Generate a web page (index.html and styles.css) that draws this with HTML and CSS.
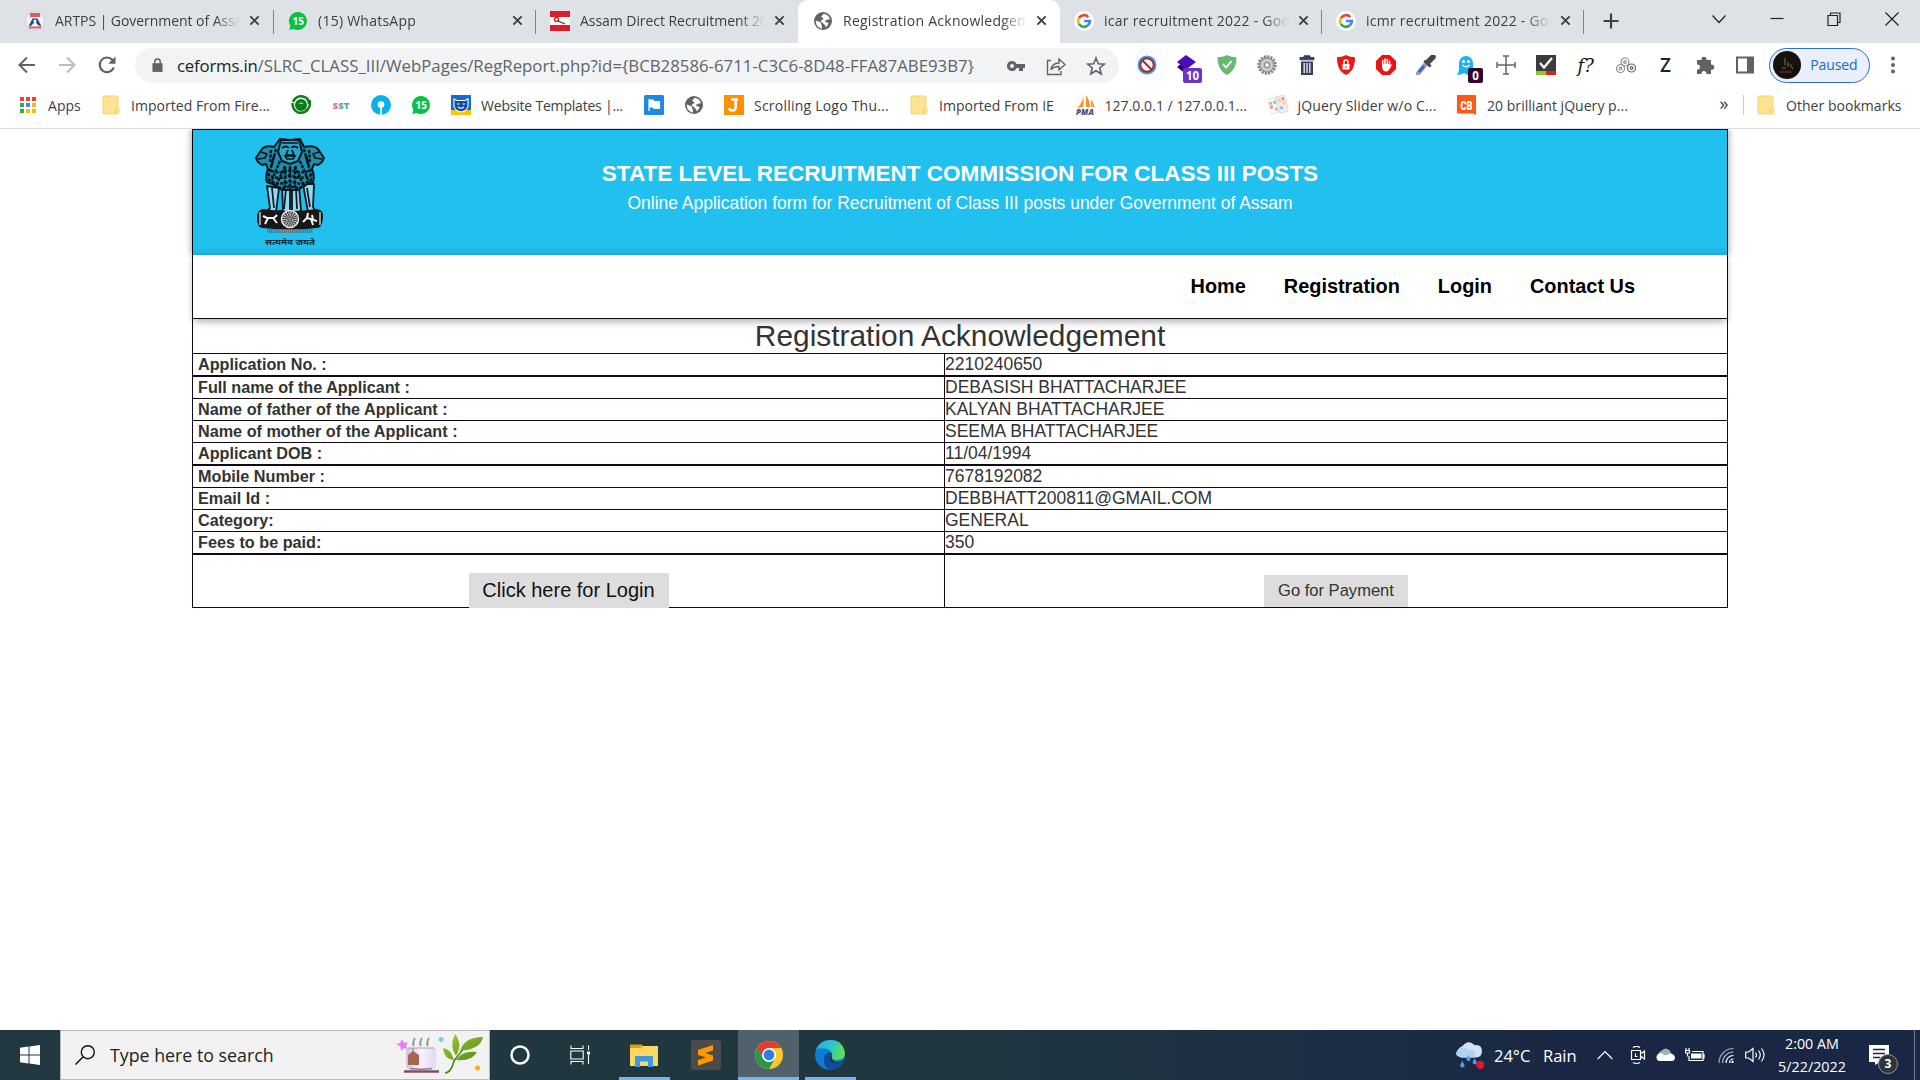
FILE: index.html
```html
<!DOCTYPE html>
<html lang="en">
<head>
<meta charset="utf-8">
<title>Registration Acknowledgement</title>
<link rel="stylesheet" href="styles.css">
</head>
<body>
<svg class="defs" width="0" height="0">
  <defs>
    <symbol id="close" viewBox="0 0 12 12"><path d="M1.5 1.5l9 9M10.5 1.5l-9 9" stroke="#3c4043" stroke-width="2.1" fill="none"/></symbol>
    <symbol id="google" viewBox="0 0 20 20"><circle cx="10" cy="10" r="10" fill="#fff"/><g fill="none" stroke-width="2.7"><path d="M14.3 6.1A5.9 5.9 0 0 0 4.9 7.1" stroke="#ea4335"/><path d="M4.9 7.1a5.9 5.9 0 0 0 0 5.8" stroke="#fbbc05"/><path d="M4.9 12.9a5.9 5.9 0 0 0 9 1.4" stroke="#34a853"/><path d="M10 10h5.9a5.9 5.9 0 0 1-2 4.3" stroke="#4285f4"/></g></symbol>
    <symbol id="whatsapp" viewBox="0 0 20 20"><path d="M10 1a9 9 0 1 1-4.4 16.9L1.2 19l1.2-4.2A9 9 0 0 1 10 1z" fill="#08c143"/><text x="10.2" y="13.7" text-anchor="middle" font-family="Open Sans, sans-serif" font-size="10" font-weight="700" fill="#fff">15</text></symbol>
    <symbol id="globe" viewBox="0 0 20 20"><circle cx="10" cy="10" r="9" fill="#5f6368"/><path d="M2.8 9.6l4.1 1.5c1.4.4 1 2.1 1.7 3.1.7.8-.1 1.7.5 3.4C5 17 2.400 13.600 2.800 9.600zM8.200 5.200C9.600 4.700 9.600 3 10.900 2.700c3 .5 5.400 2.500 6 5.400-1 1.300-1.300-.6-2.600.6-.8 1-2.500.2-2.300 1.500.3 1.200 2.500.7 3.500 2.100-.3 1.700-1.500 3.100-3 4 .3-1.900-1.300-3-2.600-4.100-.8-1-2.600-1.200-1.900-2.700 1-1.500 2.800-.6 2.300-2.100-.4-1.400-2.100-.6-2.100-2.200z" fill="#fff"/></symbol>
    <symbol id="folder" viewBox="0 0 18 20"><path d="M1.500 1h13q1.500 0 1.500 1.500V13l1 1v3.500q0 1.500-1.500 1.500H2.500Q1 19 1 17.500v-15z" fill="#ffe393" stroke="#f5d36a"/><path d="M13.500 18.500V15l2-1.500" fill="none" stroke="#eec95b"/></symbol>
  </defs>
</svg>

<div class="browser">
  <div class="tabs">
    <div class="tab snug"><svg class="fav" viewBox="0 0 20 20"><circle cx="10" cy="10" r="9.500" fill="#f1f4fa" stroke="#c7cfdf"/><path d="M5 2h10v4H5z" fill="#e2595a"/><path d="M3.500 15.500l4-8h5l4 8-3-1-3.500-4-3.500 4z" fill="#27477f"/><circle cx="10" cy="10" r="1.600" fill="#fff"/><path d="M4 16.500h12" stroke="#d95a5a" stroke-width="2"/></svg><span class="tab-title">ARTPS | Government of Assam</span><svg class="x"><use href="#close"/></svg></div>
    <div class="tab"><svg class="fav"><use href="#whatsapp"/></svg><span class="tab-title">(15) WhatsApp</span><svg class="x"><use href="#close"/></svg></div>
    <div class="tab before-active snug"><svg class="fav" viewBox="0 0 20 20"><path d="M0 0h20v20H0z" fill="#d9202a"/><path d="M0 6h20v8H0z" fill="#fff"/><circle cx="6.500" cy="8.500" r="2" fill="none" stroke="#d9202a" stroke-width="1.500"/><path d="M8 10l7 3" stroke="#7d1b20" stroke-width="1.200"/></svg><span class="tab-title">Assam Direct Recruitment 2022</span><svg class="x"><use href="#close"/></svg></div>
    <div class="tab active"><svg class="fav"><use href="#globe"/></svg><span class="tab-title">Registration Acknowledgement</span><svg class="x"><use href="#close"/></svg></div>
    <div class="tab"><svg class="fav"><use href="#google"/></svg><span class="tab-title">icar recruitment 2022 - Google</span><svg class="x"><use href="#close"/></svg></div>
    <div class="tab"><svg class="fav"><use href="#google"/></svg><span class="tab-title">icmr recruitment 2022 - Google</span><svg class="x"><use href="#close"/></svg></div>
    <svg class="plus" viewBox="0 0 16 16"><path d="M8 .5v15M.5 8h15" stroke="#3c4043" stroke-width="2.200"/></svg>
    <div class="window-buttons">
      <svg viewBox="0 0 14 14"><path d="M.5 3.500l6.500 7 6.500-7" /></svg>
      <svg viewBox="0 0 14 14"><path d="M.5 6.500h13"/></svg>
      <svg viewBox="0 0 14 14"><path d="M1 3.500h9.500v10H1zM3.500 3.500V1h9.500v9.500h-2.500"/></svg>
      <svg viewBox="0 0 14 14"><path d="M.5.500l13 13M13.500.500l-13 13"/></svg>
    </div>
  </div>

  <div class="toolbar">
    <svg class="nav-icon" viewBox="0 0 20 20"><path d="M18 10H3M10 2.500L2.500 10l7.500 7.500" stroke="#5f6368" stroke-width="2" fill="none"/></svg>
    <svg class="nav-icon" viewBox="0 0 20 20"><path d="M2 10h15M10 2.500l7.500 7.500-7.500 7.500" stroke="#bbbdc0" stroke-width="2" fill="none"/></svg>
    <svg class="nav-icon" viewBox="0 0 20 20"><path d="M16.800 12.500A7.300 7.300 0 1 1 15.500 5l1.500 2" stroke="#5f6368" stroke-width="2.200" fill="none"/><path d="M18.500 1.500v7.300h-7.300z" fill="#5f6368"/></svg>
    <div class="omnibox">
      <svg class="lock" viewBox="0 0 12 16"><path d="M.5 5.500h11V15H.5z" fill="#5f6368"/><path d="M3 6V4a3 3 0 0 1 6 0v2" fill="none" stroke="#5f6368" stroke-width="1.600"/></svg>
      <span class="url"><span class="host">ceforms.in</span><span class="path">/SLRC_CLASS_III/WebPages/RegReport.php?id={BCB28586-6711-C3C6-8D48-FFA87ABE93B7}</span></span>
      <div class="omni-actions">
        <svg viewBox="0 0 20 20"><path fill="#5f6368" fill-rule="evenodd" d="M6 5a5 5 0 0 1 4.600 3H19v4h-2v3h-4v-3h-2.400A5 5 0 1 1 6 5zm0 3a2 2 0 1 0 0 4 2 2 0 0 0 0-4z"/></svg>
        <svg viewBox="0 0 20 20"><path fill="none" stroke="#5f6368" stroke-width="1.400" d="M5 4.500H1.500v14H15V15M5 14c.5-4.500 3-7 8-7V3l6 5.500-6 5.500v-3.500c-4 0-6.500 1-8 3.500z"/></svg>
        <svg viewBox="0 0 20 20"><path fill="none" stroke="#5f6368" stroke-width="1.600" d="M10 2l2.300 5.700 6.100.4-4.700 3.900 1.500 6L10 14.700 4.800 18l1.500-6-4.700-3.900 6.100-.4z"/></svg>
      </div>
    </div>
    <div class="extensions">
      <span><svg viewBox="0 0 20 20"><circle cx="10" cy="10" r="9.500" fill="#4a96e8"/><circle cx="10" cy="10" r="6.700" fill="#f8f4f3" stroke="#a02d31" stroke-width="2"/><path d="M5.500 5.500l9 9" stroke="#a02d31" stroke-width="2"/></svg></span>
      <span><svg viewBox="0 0 20 20"><path d="M0 12l5-4 10 9-5 3z" fill="#28007b"/><path d="M9 0l10 7-10 7.500L0 7z" fill="#4b0cb8"/></svg><b class="badge violet">10</b></span>
      <span><svg viewBox="0 0 20 20"><path d="M10 0c3 1.600 6 2.200 9.500 2.200C19.500 10 17 16 10 20 3 16 .5 10 .5 2.200 4 2.200 7 1.600 10 0z" fill="#68b96f"/><path d="M6 9l3 3.500L14.500 6" fill="none" stroke="#fff" stroke-width="1.800"/></svg></span>
      <span><svg viewBox="0 0 20 20"><circle cx="10" cy="10" r="8.500" fill="none" stroke="#858585" stroke-width="2.500" stroke-dasharray="2.200 1.130"/><circle cx="10" cy="10" r="7.300" fill="#b5b5b5" stroke="#858585"/><circle cx="10" cy="10" r="4.800" fill="none" stroke="#d6d6d6" stroke-width="1.500"/><circle cx="10" cy="10" r="2.500" fill="#fff" stroke="#777"/></svg></span>
      <span><svg viewBox="0 0 20 20"><path d="M7 2V.8h6V2M3 2.500h14v2.300H3z" fill="#384060" stroke="#384060"/><path d="M4 6.500h12V20H4z" fill="#384060"/><path d="M7.200 8v10M10 8v10M12.800 8v10" stroke="#e4e6ee" stroke-width="1.400"/></svg></span>
      <span><svg viewBox="0 0 20 20"><path d="M10 0c3 1.600 6 2.200 9 2.200C19 11 16.500 16.500 10 20 3.500 16.500 1 11 1 2.200 4 2.200 7 1.600 10 0z" fill="#ee1717"/><path d="M6.500 9h7v5.500h-7z" fill="#fff"/><path d="M8 9V7a2 2 0 0 1 4 0v2" fill="none" stroke="#fff" stroke-width="1.300"/><path d="M10 11v2" stroke="#ee1717"/></svg></span>
      <span><svg viewBox="0 0 20 20"><path d="M6 0h8l6 6v8l-6 6H6l-6-6V6z" fill="#ed1212"/><path d="M6.700 10.500V5.500M9 10V4M11.300 10V4.500M13.500 11V6M13.500 13l1.500-3" stroke="#fff" stroke-width="1.500" stroke-linecap="round"/><path d="M6 9h8v3q-.9 4.500-4 4.500T6 12z" fill="#fff"/></svg></span>
      <span><svg viewBox="0 0 20 20"><path d="M2 18.500L10.500 8" stroke="#95a1b4" stroke-width="4.500" stroke-linecap="round"/><path d="M3 17l5-6" stroke="#2c61d4" stroke-width="2.500"/><path d="M8.500 5.500l6 6M12 7.500l5-5" stroke="#454545" stroke-width="3"/><path d="M13 6l4-4" stroke="#454545" stroke-width="5.500" stroke-linecap="round"/></svg></span>
      <span><svg viewBox="0 0 20 20"><path d="M3 8a7 7 0 0 1 14 0v12l-3-2-3 2-3-2-3 1.500-4 .5q2-3 2-6z" fill="#1cb3ef"/><circle cx="7.500" cy="6.500" r="1.600" fill="#fff"/><circle cx="12.500" cy="6.500" r="1.600" fill="#fff"/><path d="M6.500 10q3.500 3.500 7 0" fill="none" stroke="#fff" stroke-width="1.300"/></svg><b class="badge dark">0</b></span>
      <span><svg viewBox="0 0 20 20"><path d="M10 1v18M1 10h18M7 1h6M7 19h6M1 7v6M19 7v6" stroke="#666" stroke-width="1.500"/></svg></span>
      <span><svg viewBox="0 0 20 20"><path d="M0 0h20v16H0z" fill="#3c3c3c"/><path d="M0 16h10v4H0z" fill="#8ec928"/><path d="M10 16h10v4H10z" fill="#d92323"/><path d="M4 8l4 4.500L16 3" fill="none" stroke="#fff" stroke-width="2.200"/></svg></span>
      <span class="fq">f?</span>
      <span><svg viewBox="0 0 20 20"><g fill="none" stroke="#8e8e8e" stroke-width="1.200"><circle cx="9" cy="7" r="4"/><circle cx="9" cy="7" r="1.300"/><circle cx="4.500" cy="13.500" r="4"/><circle cx="4.500" cy="13.500" r="1.300"/><g stroke="#666"><circle cx="15.500" cy="13" r="4"/><circle cx="15.500" cy="13" r="1.300"/></g></g></svg></span>
      <span class="zed">Z</span>
      <span><svg viewBox="0 0 20 20"><path d="M2 5h4.500a2.600 2.600 0 1 1 5 0H16v4.700a2.600 2.600 0 1 1 0 5V19h-4.600a2.500 2.500 0 1 0-4.900 0H2v-4.600a2.500 2.500 0 1 0 0-4.900z" fill="#5f6368"/></svg></span>
      <span><svg viewBox="0 0 20 20"><path d="M2 2.500h16v15H2z" fill="none" stroke="#5f6368" stroke-width="2"/><path d="M12 2h6v16h-6z" fill="#5f6368"/></svg></span>
    </div>
    <div class="profile"><svg viewBox="0 0 28 28"><circle cx="14" cy="14" r="14" fill="#14110f"/><path d="M12 7v7M15 11v5M9 17h4" stroke="#7a6524" stroke-width="1.200"/><path d="M7 21h12" stroke="#6e211d" stroke-width="1.500"/><path d="M17 13l3 5" stroke="#34523b" stroke-width="1.500"/></svg><span>Paused</span></div>
    <svg class="kebab" viewBox="0 0 6 20"><g fill="#5f6368"><circle cx="3" cy="3.500" r="2"/><circle cx="3" cy="10" r="2"/><circle cx="3" cy="16.500" r="2"/></g></svg>
  </div>

  <div class="bookmarks">
    <div class="bm apps"><svg viewBox="0 0 20 20"><g><path d="M2 2h4v4H2zM8 2h4v4H8zM14 2h4v4h-4z" fill="#ea4335"/><path d="M2 8h4v4H2z" fill="#34a853"/><path d="M8 8h4v4H8z" fill="#4285f4"/><path d="M14 8h4v4h-4z" fill="#fbbc05"/><path d="M2 14h4v4H2z" fill="#34a853"/><path d="M8 14h4v4H8zM14 14h4v4h-4z" fill="#fbbc05"/></g></svg>Apps</div>
    <div class="bm w170"><svg><use href="#folder"/></svg>Imported From Fire...</div>
    <div class="bm"><svg viewBox="0 0 20 20"><circle cx="10" cy="10" r="6" fill="#087e16"/><path d="M2 7Q5 0 12 1.500 18 3 18 9M1.500 8q0 7 5.500 9.500 7 1 10-3M18.500 5q2 7-4 11" fill="none" stroke="#087e16" stroke-width="2.400"/><path d="M8.500 8.500q2.500-1.500 3.500.5" fill="none" stroke="#fff" stroke-width="1"/></svg></div>
    <div class="bm sst"><i>S</i><i>S</i><i>T</i></div>
    <div class="bm"><svg viewBox="0 0 20 20"><circle cx="10" cy="10" r="10" fill="#05b2ef"/><circle cx="10" cy="9.500" r="3.300" fill="#fff"/><path d="M9.200 10h1.600v10H9.200z" fill="#fff"/></svg></div>
    <div class="bm"><svg><use href="#whatsapp"/></svg></div>
    <div class="bm w173 tight"><svg viewBox="0 0 20 20"><path d="M0 0h20v15H0z" fill="#156bd0"/><path d="M0 15h20v5H0z" fill="#ffc400"/><path d="M3 4l3 1.500h8L17 4v7q-1 5-7 6-6-1-7-6z" fill="#0d4da7" stroke="#fff" stroke-width="1.100"/><path d="M6 9h2.500M11.500 9H14M7 12q3 2.500 6 0" stroke="#fff" fill="none" stroke-width="1.200"/></svg>Website Templates |...</div>
    <div class="bm"><svg viewBox="0 0 20 20"><rect width="20" height="20" rx="1.500" fill="#1e88e5"/><path d="M5 4v12M5 5h4l1 1.500h5.500v7H10L9 12H5z" fill="#fff" stroke="#fff" stroke-width="1.200"/></svg></div>
    <div class="bm"><svg><use href="#globe"/></svg></div>
    <div class="bm w165 loose"><svg viewBox="0 0 20 20"><path d="M0 0h20v20H0z" fill="#ff9000"/><path d="M7 4.500h7M11.700 4.500V12q0 3.500-3.500 3.500-2.500 0-3-2.500" fill="none" stroke="#fff" stroke-width="2.600"/></svg>Scrolling Logo Thu...</div>
    <div class="bm w146"><svg><use href="#folder"/></svg>Imported From IE</div>
    <div class="bm w173"><svg viewBox="0 0 20 20"><path d="M8.500 1v11L2 13Q7 9 8.500 1zM11 0q4 6 4.500 12H11zM15.500 4q3 4 4 8h-3z" fill="#f7941d"/><text x="10" y="19.500" font-family="Open Sans, sans-serif" font-style="italic" font-size="8" font-weight="800" text-anchor="middle" fill="#534b78">PMA</text></svg>127.0.0.1 / 127.0.0.1...</div>
    <div class="bm w169 wide"><svg viewBox="0 0 20 20"><g transform="rotate(-14 10 10)" stroke="#d0d0d6" stroke-width=".6"><path d="M1 2h8v15H1z" fill="#fff"/><path d="M10 1.500h9v17h-9z" fill="#f8e9ef"/><g stroke="none"><path d="M2 5h2.500v3H2zM6 12h2.500v3H6z" fill="#f6a66d"/><path d="M6 5h2.500v3H6zM11.500 12h2.500v3h-2.500z" fill="#6dc3f1"/><path d="M2 9h2.500v3H2zM15 3.500h2.500v3H15z" fill="#ee82ad"/><path d="M11.500 4h2.500v3h-2.500zM15 8h2.500v3H15z" fill="#f5d45a"/></g></g></svg>jQuery Slider w/o C...</div>
    <div class="bm w172"><svg viewBox="0 0 20 20"><path d="M0 0h18q1 0 1 1v19l-3-1.500H0z" fill="#ff5a13"/><text x="9.500" y="14.500" font-family="Roboto, sans-serif" font-size="13" font-weight="900" text-anchor="middle" fill="#fff" textLength="12" lengthAdjust="spacingAndGlyphs">CB</text></svg>20 brilliant jQuery p...</div>
    <span class="more">»</span>
    <div class="bm other"><svg><use href="#folder"/></svg>Other bookmarks</div>
  </div>
</div>

<main class="page">
  <header class="banner">
    <svg class="emblem" viewBox="0 0 72 110">
      <g stroke="#071820" stroke-linejoin="round">
        <path d="M13 48l3 22-4 4h10l3-24zM28 48l1 25h-4l7 2 4-2V50zM38 50v24l7 1 2-3-2-24zM49 46l5 28h8l-3-5 1-23z" fill="#94d8ed" stroke-width="1.800"/>
        <path d="M20 9Q12 7 8 11l-6 9 2 4 4 3 4-1 2 5q-3 7-1 13l8 3 7 5h16l7-5 8-3q2-6-1-13l2-5 4 1 4-3 2-4-6-9Q60 7 50 9L46 1 36 2 26 1z" fill="#1f8fae" stroke-width="2"/>
        <path d="M27 2h18l3 12-4 9-8 3-8-3-4-9z" fill="#2aa6cb" stroke-width="2"/>
      </g>
      <g fill="none" stroke="#071820" stroke-width="2.500" stroke-dasharray="3.200 1.200">
        <path d="M22 11l-5 18M26 23l-9 21M31 28l-9 20M50 11l5 18M46 23l9 21M41 28l9 20M36 28v25M31 29v24M41 29v24"/>
        <path d="M13 31q10 6 23 1 13 5 23-1M13 36q10 7 23 1 13 6 23-1M14 41q10 8 22 2 12 6 22-2M20 47q8 5 16 1 8 4 16-1M17 12l-1 12M55 12l1 12M20 18l-6 22M52 18l6 22"/>
      </g>
      <g fill="none" stroke="#071820" stroke-width="1.700"><path d="M28 10q4-3 7 0M37 10q3-3 7 0M31 18h10l-2 3h-6zM34 12l-2 5h8l-2-5M28 5h16M7 14l6 2-2 4-7 1M65 14l-6 2 2 4 7 1M18 50l2 20M32 51l-2 20M42 51l1 20M53 50l3 19"/></g>
      <path d="M9 71q27 4 54 0 7 1 6 9-1 10-6 10-27 3-54 0-6 0-6-10 0-8 6-9z" fill="#171717"/>
      <path d="M6 74v13M66 74v13" stroke="#999" stroke-width="2"/>
      <circle cx="36" cy="81" r="8.500" fill="#333" stroke="#eee" stroke-width="1.500"/><circle cx="36" cy="81" r="5" fill="none" stroke="#ccc" stroke-width="5.500" stroke-dasharray=".9 .9"/><circle cx="36" cy="81" r="2" fill="#888"/>
      <path d="M9 78l4 2 7 0 3-3M11 86l3-6M19 80l4 5M49 84l4-4 1-5M53 80l4 1 2 6M58 77l1 5 4 1" fill="none" stroke="#f4f4f4" stroke-width="2"/>
      <path d="M13 93h46" stroke="#64717a" stroke-width="4" stroke-dasharray="1.200 .7"/>
      <text x="36" y="107" text-anchor="middle" font-family="Noto Sans, sans-serif" font-size="8" font-weight="600" fill="#071820" textLength="50" lengthAdjust="spacingAndGlyphs">सत्यमेव जयते</text>
    </svg>
    <div class="banner-text">
      <h1>STATE LEVEL RECRUITMENT COMMISSION FOR CLASS III POSTS</h1>
      <p>Online Application form for Recruitment of Class III posts under Government of Assam</p>
    </div>
  </header>
  <nav class="menu"><a>Home</a><a>Registration</a><a>Login</a><a>Contact Us</a></nav>
  <h2>Registration Acknowledgement</h2>
  <div class="row thick"><b>Application No. :</b><span>2210240650</span></div>
  <div class="row"><b>Full name of the Applicant :</b><span>DEBASISH BHATTACHARJEE</span></div>
  <div class="row"><b>Name of father of the Applicant :</b><span>KALYAN BHATTACHARJEE</span></div>
  <div class="row"><b>Name of mother of the Applicant :</b><span>SEEMA BHATTACHARJEE</span></div>
  <div class="row thick"><b>Applicant DOB :</b><span>11/04/1994</span></div>
  <div class="row"><b>Mobile Number :</b><span>7678192082</span></div>
  <div class="row"><b>Email Id :</b><span>DEBBHATT200811@GMAIL.COM</span></div>
  <div class="row"><b>Category:</b><span>GENERAL</span></div>
  <div class="row thick"><b>Fees to be paid:</b><span>350</span></div>
  <div class="actions">
    <div class="cell"><a class="login">Click here for Login</a></div>
    <div class="cell"><a class="pay">Go for Payment</a></div>
  </div>
</main>

<footer class="taskbar">
  <div class="start"><svg viewBox="0 0 20 20"><path d="M0 2.800L8.500 1.600V9.500H0zM9.500 1.500L20 0v9.500H9.500zM0 10.500h8.500v7.900L0 17.200zM9.500 10.500H20V20L9.500 18.500z" fill="#fff"/></svg></div>
  <div class="search">
    <svg class="lens" viewBox="0 0 20 20"><circle cx="12.800" cy="7.200" r="6.500" fill="none" stroke="#111" stroke-width="1.400"/><path d="M8.200 11.800L.5 19.500" stroke="#111" stroke-width="1.500"/></svg>
    <span>Type here to search</span>
    <svg class="art" viewBox="0 0 88 42">
      <defs><linearGradient id="cup"><stop offset="0" stop-color="#cfc3e0"/><stop offset=".5" stop-color="#f6f2fd"/><stop offset="1" stop-color="#e2d7f5"/></linearGradient><linearGradient id="leaf" x2="1" y2="1"><stop offset="0" stop-color="#a8cd3c"/><stop offset="1" stop-color="#4f8a12"/></linearGradient></defs>
      <path d="M6 5l2 4 4-1-2 4 2 4-4-2-3 3-.5-4.500L0 10l4-1z" fill="#e77bff"/>
      <path d="M18 12q-2-3 1-8M25 12q-2-3 1-8M32 12q-2-3 1-8" fill="none" stroke="#999" stroke-width="2"/>
      <path d="M10 14h30v16q0 6-6 6H16q-6 0-6-6z" fill="url(#cup)"/><path d="M14 34.500q11 1.500 22 0" fill="none" stroke="#8b7ba6" stroke-width="1.500"/><path d="M12 14h26" stroke="#a99abb"/><path d="M12 21l5-4 6 4v10H12z" fill="#a4664d"/><path d="M17 14v5" stroke="#a4664d"/>
      <path d="M8 37.500h35" stroke="#80505f" stroke-width="2.500"/>
      <circle cx="45" cy="5.500" r="2.500" fill="#6ed5e6"/>
      <path d="M49 39q6 0 9-12Q67 14 77 6" fill="none" stroke="#3f8010" stroke-width="1.500"/>
      <path d="M58 26Q48 25 47 14q8 1 11 12zM60 22q-7-10-1-22 8 10 1 22zM64 17q4-14 23-14-2 12-23 14zM60 26q6-10 21-8-6 10-21 8z" fill="url(#leaf)"/>
      <circle cx="81.500" cy="34" r="2.500" fill="#ffb000"/>
    </svg>
  </div>
  <div class="task"><svg class="i20" viewBox="0 0 20 20"><circle cx="10" cy="10" r="8.500" fill="none" stroke="#fff" stroke-width="2.500"/></svg></div>
  <div class="task view"><svg class="i20" viewBox="0 0 20 20"><path d="M1 .5v3h12v-3M1 19.500v-3h12v3M.8 6h12.400v8H.8zM18.500.5V5M18.500 10v9" fill="none" stroke="#fff" stroke-width="1.100"/><path d="M17 6.500h3v3h-3z" fill="#fff"/></svg></div>
  <div class="task open explorer"><svg viewBox="0 0 28 24"><path d="M0 1.500h12l1.500 2.500H27v18H0z" fill="#dfa000"/><path d="M0 5h11l2-2h15v20H0z" fill="#ffd763"/><path d="M5 24V14q0-1 1-1h16q1 0 1 1v10h-5v-5.500h-8V24z" fill="#3e98dc"/></svg></div>
  <div class="task sublime"><svg viewBox="0 0 30 30"><rect width="30" height="30" rx="2" fill="#4b4b4b"/><path d="M7 10l15-5v5.500l-8 2.500 8 2.500v5L7 25.500V20l8-2.500L7 15z" fill="#ff9800"/></svg></div>
  <div class="task open current"><svg viewBox="0 0 28 28"><circle cx="14" cy="14" r="14" fill="#fdc72e"/><path d="M14 7h12.100A14 14 0 0 0 1.900 7l6 10.500z" fill="#e33b2e"/><path d="M1.900 7A14 14 0 0 0 14 28l6.100-10.500L14 21l-6.100-3.500z" fill="#24994a"/><circle cx="14" cy="14" r="7" fill="#fff"/><circle cx="14" cy="14" r="5.400" fill="#2f7cf0"/></svg></div>
  <div class="task open edge"><svg viewBox="0 0 30 30"><defs><linearGradient id="sea" x2="1" y2=".3"><stop offset="0" stop-color="#29a9ea"/><stop offset=".55" stop-color="#2cc3ce"/><stop offset="1" stop-color="#5fdc55"/></linearGradient></defs><circle cx="15" cy="15" r="15" fill="#0b7cd5"/><path d="M1 10Q5 0 15 0q13 0 15 13 0 7-8 7-6 0-5-3 1-6-5-8Q5 7 1 10z" fill="url(#sea)"/><path d="M28 22Q23 30 15 30 8 27 9 18q1-5 6-6 3 1 2 5-1 2 1 4 4 3 10 1z" fill="#0d4c9c"/><path d="M17 16q-1 2 1 4 4 4 11 0l1-3 0 4-2 1q-9 3-13-2-1-3 2-4z" fill="#20364a"/></svg></div>
  <div class="tray">
    <svg class="weather" viewBox="0 0 28 26"><path d="M6 15a6 6 0 0 1 1-11q6-7 12-1 7-1 7 6 0 6-6 6z" fill="#cfe4f6"/><path d="M4 6q6-2 9 2 5-2 7 2l-1 5H6Q-3 13 4 6z" fill="#aed2f0"/><path d="M7 18l-2 4q0 3 2.500 2.500T9 22zM13 13l-2 3q0 2.500 2 2.500t2-2.500zM19 16l-2 3q0 2.500 2 2.500t2-2.500z" fill="#4da3ea"/><circle cx="24.500" cy="22" r="4" fill="#e81430"/></svg>
    <span class="temp">24°C</span><span class="rain">Rain</span>
    <svg class="up" viewBox="0 0 16 16"><path d="M.7 12L8 4.500l7.300 7.500" class="ln"/></svg>
    <svg class="cam" viewBox="0 0 16 18"><path d="M1.500 4.500h9v9h-9zM10.500 8l4-3v8l-4-3M3 1.500q3.500-2 7 0M3 16.500q3.500 2 7 0M5.500 7.500v3h2" class="ln"/></svg>
    <svg class="cloud" viewBox="0 0 20 14"><path d="M4 9a4 4 0 0 1 2-6q5-5 9 0l2 4z" fill="#a9adb8"/><path d="M4 13a4 4 0 0 1 0-7.500q3-1 6 2l6-2q4 1 4 4.500-.5 3-3 3z" fill="#fff"/></svg>
    <svg class="batt" viewBox="0 0 20 14"><path d="M4 8v4.500h14v-9H7M19 6v4.500" class="ln"/><path d="M6 5.500h10.500v5H6z" fill="#fff"/><path d="M1 0v2M4 0v2M.5 2.500h4v2.500h-4zM2.500 5v3.500" class="ln"/></svg>
    <svg class="wifi" viewBox="0 0 16 16"><path d="M1 16A14.500 14.500 0 0 1 15.500 1.500M4.500 16A11 11 0 0 1 15.500 5" class="ln" opacity=".6"/><path d="M8 16a7.500 7.500 0 0 1 7.500-7.500" class="ln"/><path d="M11.500 16a4 4 0 0 1 4-4" class="ln"/><circle cx="14.500" cy="15" r="1.200" fill="#fff"/></svg>
    <svg class="vol" viewBox="0 0 20 16"><path d="M.7 5h3L8 1.500v13L3.700 11h-3zM10.500 5.500q2 2.500 0 5M13.500 3.500q3.500 4.500 0 9M16.500 1.500q5 6.500 0 13" class="ln"/></svg>
    <div class="clock"><span>2:00 AM</span><span>5/22/2022</span></div>
    <div class="notes"><svg viewBox="0 0 20 20"><path d="M0 0h20v17h-9l-5 3v-3H0z" fill="#fff"/><path d="M4 4.500h12M4 8.500h12M4 12.500h7" stroke="#1b2741" stroke-width="1.300"/></svg><b>3</b></div>
    <i class="desktop-edge"></i>
  </div>
</footer>
</body>
</html>
```
FILE: styles.css
```css
* { box-sizing: border-box; }
html, body { margin: 0; height: 100%; }
body { width: 1920px; height: 1080px; overflow: hidden; display: flex; flex-direction: column; background: #fff; color: #333; font-family: "Liberation Sans", Arial, sans-serif; }
svg { display: block; flex: none; }
.defs { position: absolute; }

/* browser chrome */
.browser { position: relative; z-index: 5; flex: none; height: 129px; background: #fff; border-bottom: 1px solid #dcdde0; font-family: "Open Sans", sans-serif; font-size: 14px; color: #3c4043; }
.tabs { display: flex; height: 43px; padding-left: 12px; background: #dee1e6; }
.tab { position: relative; display: flex; align-items: center; width: 262px; padding: 0 14px 2px 13px; }
.tab + .tab { padding: 0 13px 2px 14px; }
.tab.active { padding: 0 13px 2px 15px; }
.tab::after { content: ""; position: absolute; right: 0; top: 10px; width: 1px; height: 24px; background: #80848a; }
.before-active::after, .active::after { display: none; }
.active { background: #fff; border-radius: 10px 10px 0 0; }
.fav { width: 20px; height: 20px; margin-right: 10px; }
.tab-title { flex: 1; overflow: hidden; white-space: nowrap; letter-spacing: .25px; -webkit-mask-image: linear-gradient(90deg, #000 86%, transparent); mask-image: linear-gradient(90deg, #000 86%, transparent); }
.snug .tab-title { letter-spacing: -.05px; }
.x { width: 11px; height: 11px; margin-left: 9px; }
.plus { width: 16px; height: 16px; margin: 13px 0 0 19px; }
.window-buttons { display: flex; gap: 43.500px; margin: 12px 0 0 93px; }
.window-buttons svg { width: 14px; height: 14px; fill: none; stroke: #222; stroke-width: 1.200; }
.toolbar { display: flex; align-items: center; height: 44px; padding-left: 17px; }
.nav-icon { width: 20px; height: 20px; margin-right: 20px; }
.nav-icon:nth-child(3) { margin-right: 18px; }
.omnibox { display: flex; align-items: center; width: 984px; height: 35px; margin-top: 1px; padding: 0 13px 0 17px; border-radius: 18px; background: #f1f3f4; }
.lock { width: 11px; height: 15px; margin-right: 14px; }
.url { flex: 1; font-size: 16.800px; white-space: nowrap; color: #5f6368; }
.host { color: #202124; letter-spacing: -.2px; }
.path { letter-spacing: .01px; }
.omni-actions { display: flex; gap: 20px; }
.omni-actions svg { width: 20px; height: 20px; }
.extensions { display: flex; margin-left: 8px; }
.extensions span { position: relative; display: flex; justify-content: center; align-items: center; width: 39.900px; height: 40px; }
.extensions svg { width: 20px; height: 20px; }
.badge { position: absolute; left: 16px; top: 23px; height: 15px; padding: 0 3px; border-radius: 2px; color: #fff; font-size: 11.500px; line-height: 15px; }
.violet { background: #6b35c2; }
.dark { left: 22px; padding: 0 4px; background: #33052f; }
.extensions .fq { color: #111; font: italic 400 21px "DejaVu Serif", "Liberation Serif", serif; font-size: 18px; }
.zed { color: #222; font-size: 19px; font-weight: 600; }
.profile { display: flex; align-items: center; gap: 9px; width: 101px; height: 35px; margin-left: 4px; padding-left: 3px; border: 1.500px solid #2a6fd6; border-radius: 18px; background: #e9f0fb; color: #1967d2; }
.profile svg { width: 28px; height: 28px; }
.profile span { letter-spacing: -.1px; padding-bottom: 2px; }
.kebab { width: 6px; height: 20px; margin-left: 20px; }
.bookmarks { display: flex; align-items: center; height: 38px; padding: 0 0 2px 18px; }
.bm { display: flex; align-items: center; gap: 10px; width: 20px; margin-right: 20px; white-space: nowrap; letter-spacing: .04px; }
.bm svg { width: 20px; height: 20px; }
.apps { width: 63px; }
.w146 { width: 145.500px; } .w165 { width: 165px; } .w169 { width: 169.500px; } .w170 { width: 170px; } .w172 { width: 172px; } .w173 { width: 173px; }
.tight { letter-spacing: -.2px; }
.loose { letter-spacing: .22px; }
.wide { letter-spacing: .15px; }
.sst { justify-content: center; gap: 0; font-size: 9.500px; font-weight: 800; }
.sst i { font-style: normal; color: #e47272; }
.sst i:nth-child(2) { color: #5aa7a1; }
.sst i:nth-child(3) { color: #54a99b; }
.more { width: 20px; margin: -4px 9px 0 65px; font-size: 18px; text-align: center; }
.other { width: 170px; height: 20px; margin: 0; padding-left: 12px; border-left: 1px solid #c9ccd0; }

/* registration page */
.page { width: 1536px; margin: 0 auto; border: 1px solid #120817; border-width: 0 1px; }
.page > * { position: relative; }
.banner { z-index: 1; height: 126px; padding-left: 61px; display: flex; background: linear-gradient(#21c0ef 116px, #20b5e1); border-top: 1px solid #120817; box-shadow: 0 0 8px rgba(0, 0, 0, .55); }
.emblem { width: 72px; height: 110px; margin-top: 8px; }
.banner-text { flex: 1; margin-right: 133px; color: #fff; text-align: center; }
h1 { margin: 31px 0 0; font-size: 22.500px; line-height: 26px; }
p { margin: 5px 0 0; font-size: 17.480px; line-height: 22px; }
.menu { z-index: 2; display: flex; justify-content: flex-end; gap: 38px; height: 64px; padding: 20px 92px 0 0; border-bottom: 1px solid #120817; background: #fff; box-shadow: 0 3px 8px -1px rgba(0, 0, 0, .35); color: #000; font-size: 19.900px; font-weight: 700; line-height: 23px; }
h2 { z-index: 3; height: 35px; margin: 0; border-bottom: 1px solid #120817; font-size: 29.900px; font-weight: 400; line-height: 33px; text-align: center; }
.row { display: flex; height: 22px; border-bottom: 1px solid #120817; font-size: 17.500px; line-height: 20px; }
.thick { height: 23px; border-bottom-width: 2px; }
.row b { width: 751px; padding-left: 5px; font-size: 16.220px; }
.row span, .cell + .cell { flex: 1; border-left: 1px solid #120817; }
.actions { display: flex; height: 53px; border-bottom: 1px solid #120817; }
.cell { display: flex; justify-content: center; align-items: flex-end; width: 751px; }
.login, .pay { background: #ddd; text-align: center; }
.login { width: 200px; height: 35px; margin-bottom: -1px; color: #111; font-size: 20px; line-height: 34px; }
.pay { width: 144px; height: 32px; font-size: 16.560px; line-height: 31px; }

/* windows taskbar */
.taskbar { display: flex; flex: none; height: 50px; margin-top: auto; background: linear-gradient(90deg, #213841 0, #203740 48%, #1d3043 65%, #1a2744 82%, #1a2744); color: #fff; font-family: "Open Sans", sans-serif; }
.start { display: flex; justify-content: center; align-items: center; width: 60px; }
.start svg, .i20 { width: 20px; height: 20px; }
.search { display: flex; align-items: center; width: 430px; padding: 0 5px 0 14px; border: 1px solid #b9b9b9; background: #f2f2f2; color: #222; font-size: 17.800px; }
.lens { width: 20px; height: 20px; margin-right: 15px; }
.search span { flex: 1; white-space: nowrap; }
.art { width: 88px; height: 42px; }
.task { display: flex; justify-content: center; align-items: center; width: 60px; }
.view { margin-right: 9px; }
.open { border-bottom: 3px solid #76b5ee; padding-top: 3px; }
.explorer { width: 51px; padding-right: 2px; }
.explorer svg { width: 28px; height: 24px; }
.sublime { width: 68px; padding-left: 4px; }
.sublime svg, .edge svg { width: 30px; height: 30px; }
.current { width: 61px; background: #50616b; }
.current svg { width: 28px; height: 28px; }
.edge { width: 51px; margin-left: 6px; padding-right: 2px; }
.tray { display: flex; align-items: center; margin-left: auto; }
.ln { fill: none; stroke: #fff; stroke-width: 1.200; }
.weather { width: 29px; height: 27px; margin-right: 10px; }
.temp, .rain { font-size: 16.500px; white-space: nowrap; }
.temp { width: 49px; }
.rain { width: 54px; }
.up { width: 16px; height: 16px; margin-right: 17px; }
.cam { width: 16px; height: 18px; margin-right: 9px; }
.cloud { width: 20px; height: 14px; margin-right: 10px; }
.batt { width: 20px; height: 14px; margin-right: 13px; }
.wifi { width: 16px; height: 16px; margin-right: 11px; }
.vol { width: 20px; height: 16px; }
.clock { display: flex; flex-direction: column; align-items: center; width: 94px; font-size: 14.350px; line-height: 23px; padding-bottom: 1px; }
.notes { position: relative; width: 20px; height: 20px; margin: 0 25px 0 10px; }
.notes svg { width: 20px; height: 20px; }
.notes b { position: absolute; left: 9px; top: 9px; width: 20px; height: 20px; border: 1px solid #8c919b; border-radius: 50%; background: #30343a; font-size: 12px; line-height: 18px; text-align: center; }
.desktop-edge { width: 1px; height: 50px; margin-right: 5px; background: #78808e; }
```
